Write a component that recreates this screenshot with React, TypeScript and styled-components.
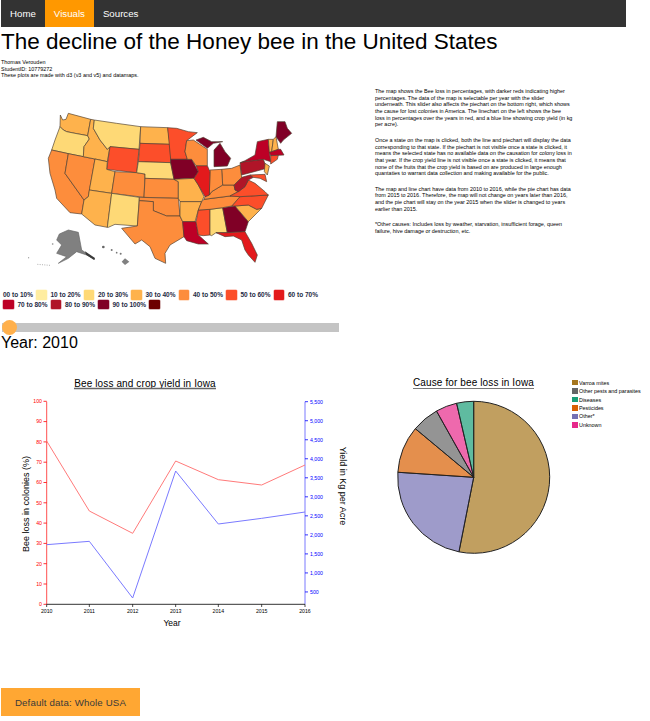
import React from 'react';
import styled, { createGlobalStyle } from 'styled-components';

const GlobalStyle = createGlobalStyle`
  html, body {
    margin: 0;
    padding: 0;
    background: #fff;
    overflow: hidden;
  }
  body {
    font-family: "Liberation Sans", Arial, sans-serif;
    color: #000;
  }
`;

const Page = styled.div`
  width: 650px;
  height: 721px;
  padding-left: 1px;
  box-sizing: border-box;
  overflow: hidden;
`;

const Nav = styled.nav`
  display: flex;
  width: 625px;
  height: 27px;
  background: #333;
`;

const NavLink = styled.a<{ $active?: boolean }>`
  display: flex;
  align-items: center;
  padding: 0 9px;
  font-size: 9.7px;
  color: #fff;
  background: ${p => (p.$active ? '#ff9800' : 'transparent')};
`;

const Title = styled.h1`
  margin: 0;
  height: 31px;
  font-size: 22.5px;
  font-weight: 400;
  line-height: 29px;
  color: #000;
  white-space: nowrap;
`;

const Intro = styled.div`
  height: 30px;
  padding-top: 1px;
  box-sizing: border-box;
  font-size: 5.45px;
  line-height: 6.6px;
`;

const TopRow = styled.div`
  display: flex;
  height: 282px;
`;

const LeftCol = styled.div`
  width: 374px;
  flex-shrink: 0;
`;

const MapSvg = styled.svg`
  display: block;
  width: 320px;
  height: 190px;
  margin: 2px 0 0 -1px;
`;

const Legend = styled.div`
  display: flex;
  flex-wrap: wrap;
  align-items: center;
  width: 332px;
  margin: 10px 0 0 2px;
`;

const LegendLabel = styled.span`
  height: 9.6px;
  margin-right: 3px;
  font-size: 6.5px;
  font-weight: 700;
  line-height: 9.6px;
  color: #1d2a44;
`;

const Swatch = styled.span<{ $color: string }>`
  display: block;
  width: 10.5px;
  height: 9.6px;
  margin-right: 4px;
  border-radius: 1px;
  background: ${p => p.$color};
  box-shadow: 0 0 0 0.5px ${p => p.$color}88;
`;

const Slider = styled.div`
  position: relative;
  width: 337px;
  height: 9px;
  margin: 13.8px 0 0 1px;
  background: #c4c4c4;
`;

const Thumb = styled.span`
  position: absolute;
  left: 0;
  top: -3px;
  width: 15px;
  height: 15px;
  border-radius: 50%;
  background: #ffb04c;
`;

const Year = styled.div`
  margin-top: 2px;
  font-size: 16px;
  line-height: 18px;
`;

const RightCol = styled.div`
  width: 200px;
  font-size: 5.45px;
  line-height: 6.67px;
`;

const Para = styled.p`
  margin: 0 0 8.8px;
`;

const Line = styled.span`
  display: block;
  white-space: nowrap;
`;

const ChartRow = styled.div`
  display: flex;
  height: 270px;
`;

const LineSvg = styled.svg`
  display: block;
  width: 360px;
  height: 270px;
  margin-left: -1px;
  flex-shrink: 0;
  font-family: "Liberation Sans", Arial, sans-serif;
`;

const PieBlock = styled.div`
  display: flex;
  margin-left: 20px;
`;

const PieSvg = styled.svg`
  display: block;
  width: 190px;
  height: 190px;
  flex-shrink: 0;
`;

const PieColumn = styled.div`
  width: 190px;
  flex-shrink: 0;
  font-family: "Liberation Sans", Arial, sans-serif;
`;

const PieTitle = styled.div`
  height: 21px;
  box-sizing: border-box;
  padding-top: 7px;
  margin-left: 33px;
  font-size: 10px;
  line-height: 12px;
`;

const Underlined = styled.span`
  border-bottom: 1.5px solid #777;
  letter-spacing: 0.12px;
`;

const PieLegend = styled.ul`
  list-style: none;
  margin: 0 0 0 2px;
  padding: 8.5px 0 0;
`;

const PieLegendRow = styled.li`
  display: flex;
  align-items: center;
  gap: 1.5px;
  height: 8.45px;
  font-size: 5.4px;
  white-space: nowrap;
`;

const PieSwatch = styled.span<{ $color: string }>`
  display: block;
  width: 5.5px;
  height: 5.5px;
  background: ${p => p.$color};
`;

const ResetButton = styled.button`
  display: block;
  width: 139px;
  height: 28px;
  margin-top: 48px;
  padding: 0;
  border: 0;
  background: #ffa733;
  font-family: "Liberation Sans", Arial, sans-serif;
  font-size: 9.7px;
  letter-spacing: 0.15px;
  color: #3a3a3a;
`;

const c = {
  a: '#ffeda0',
  b: '#fed976',
  c: '#feb24c',
  d: '#fd8d3c',
  e: '#fc4e2a',
  f: '#e31a1c',
  g: '#bd0026',
  h: '#b01528',
  i: '#800026',
  j: '#6d0000',
};

// coordinates are read off a 3x crop of the map, viewBox below is 960x570
const states: [string, string][] = [
  [c.c, '181,75 188,90 198,88 205,70 272,88 263,137 225,130 200,125 190,120 180,110'],
  [c.b, '180,110 190,120 200,125 225,130 263,137 268,147 252,170 250,200 205,191 155,180 165,150'],
  [c.d, '155,180 205,191 195,250 252,330 245,372 210,368 170,325 165,300 150,250 145,205'],
  [c.d, '205,191 250,200 285,207 265,320 252,330 195,250'],
  [c.c, '272,88 283,90 280,115 300,150 322,178 330,170 322,215 285,207 250,200 252,170 268,147 263,137'],
  [c.b, '283,90 350,100 422,110 417,178 330,170 322,178 300,150 280,115'],
  [c.e, '330,170 417,178 410,248 320,238'],
  [c.c, '285,207 322,215 320,238 345,245 335,310 268,300'],
  [c.d, '345,245 410,248 435,252 432,322 335,310'],
  [c.c, '268,300 335,310 322,412 285,405 245,372 252,330 265,320'],
  [c.b, '335,310 418,322 412,408 345,403 325,412 322,412'],
  [c.c, '422,110 503,113 510,163 420,160'],
  [c.e, '420,160 510,163 512,208 512,218 415,215'],
  [c.b, '415,215 512,218 522,268 435,265 435,252 410,248'],
  [c.d, '435,265 522,268 535,275 535,325 432,322'],
  [c.d, '418,322 535,325 540,378 500,378 460,362 460,335 418,332'],
  [c.d, '418,332 460,335 460,362 500,378 540,378 548,395 552,440 510,465 495,490 497,520 465,505 450,470 425,450 405,462 365,415 412,408'],
  [c.e, '503,113 530,115 565,125 592,128 560,152 555,185 562,208 512,208'],
  [c.i, '512,208 562,208 575,208 595,245 582,265 522,268 512,218'],
  [c.c, '522,268 582,265 595,285 612,320 605,335 540,335 535,325 535,275'],
  [c.c, '540,335 605,335 595,360 585,395 548,395 540,378'],
  [c.g, '548,395 588,395 595,435 625,462 595,462 560,452 552,440'],
  [c.e, '595,360 630,358 630,435 610,437 595,435 588,395'],
  [c.b, '630,358 668,353 682,428 648,428 635,437 630,435'],
  [c.i, '668,353 705,348 745,395 735,425 682,428'],
  [c.f, '648,428 682,428 735,425 755,460 772,495 765,517 745,495 735,480 725,450 700,438 675,440'],
  [c.c, '705,348 745,345 770,358 785,355 745,395'],
  [c.e, '695,348 720,320 805,315 785,355 770,358 745,345 705,348'],
  [c.d, '605,335 612,328 690,318 720,320 695,348 668,353 630,358 595,360'],
  [c.d, '612,328 615,320 628,315 635,305 668,285 702,285 705,300 715,305 690,318'],
  [c.e, '690,318 715,305 735,290 745,270 765,280 795,305 805,315 720,320'],
  [c.h, '702,285 722,265 725,262 750,255 760,262 745,270 735,290 715,305 705,300'],
  [c.d, '665,238 695,235 720,225 725,262 722,265 702,285 668,285'],
  [c.d, '630,240 665,238 668,285 635,305 628,315'],
  [c.f, '588,227 622,227 630,245 628,315 615,320 595,285 582,265 595,245'],
  [c.d, '560,152 580,150 622,178 622,227 588,227 575,208 562,208 555,185'],
  [c.i, '588,150 610,142 635,155 668,155 640,160 622,175'],
  [c.i, '642,230 642,180 660,160 675,185 692,205 682,228'],
  [c.h, '720,218 733,215 790,208 800,235 725,255'],
  [c.g, '722,218 735,212 765,195 772,155 805,148 810,200 812,215 790,208 733,215'],
  [c.i, '832,95 855,95 862,115 875,130 850,150 842,160 828,140'],
  [c.c, '805,148 820,148 815,185 808,187'],
  [c.c, '820,148 828,140 835,178 815,185'],
  [c.g, '808,187 815,185 835,178 842,178 852,195 812,197'],
  [c.e, '812,197 835,196 832,208 812,222'],
  [c.c, '795,220 808,228 802,255 793,245'],
  [c.e, '750,255 795,253 800,275 780,265 760,262'],
];

const alaska = '178,432 205,420 235,427 245,480 285,508 260,495 230,485 205,505 175,520 200,500 170,490 185,465 170,450';
const hawaii = '375,505 388,515 375,525 365,515';

const legend: [string, string][] = [
  ['00 to 10%', c.a],
  ['10 to 20%', c.b],
  ['20 to 30%', c.c],
  ['30 to 40%', c.d],
  ['40 to 50%', c.e],
  ['50 to 60%', c.f],
  ['60 to 70%', c.g],
  ['70 to 80%', c.h],
  ['80 to 90%', c.i],
  ['90 to 100%', c.j],
];

const notes: string[][] = [
  [
    'The map shows the Bee loss in percentages, with darker reds indicating higher',
    'percentages. The data of the map is selectable per year with the slider',
    'underneath. This slider also affects the piechart on the bottom right, which shows',
    'the cause for lost colonies in America. The linechart on the left shows the bee',
    'loss in percentages over the years in red, and a blue line showing crop yield (in kg',
    'per acre).',
  ],
  [
    'Once a state on the map is clicked, both the line and piechart will display the data',
    'corresponding to that state. If the piechart is not visible once a state is clicked, it',
    'means the selected state has no available data on the causation for colony loss in',
    'that year. If the crop yield line is not visible once a state is clicked, it means that',
    'none of the fruits that the crop yield is based on are produced in large enough',
    'quantaties to warrant data collection and making available for the public.',
  ],
  [
    'The map and line chart have data from 2010 to 2016, while the pie chart has data',
    'from 2015 to 2016. Therefore, the map will not change on years later than 2016,',
    'and the pie chart will stay on the year 2015 when the slider is changed to years',
    'earlier than 2015.',
  ],
  [
    '*Other causes: Includes loss by weather, starvation, insufficient forage, queen',
    'failure, hive damage or destruction, etc.',
  ],
];

const xTicks = [140, 268, 398, 527, 655, 785, 915].map(v => v / 3);
const years = [2010, 2011, 2012, 2013, 2014, 2015, 2016];
const redLine = [213, 423, 490, 273, 329, 345, 285].map(v => v / 3);
const blueLine = [524, 514, 684, 303, 462, 445, 426].map(v => v / 3);
const points = (ys: number[]) => ys.map((y, i) => `${xTicks[i]},${y}`).join(' ');

const leftTicks = Array.from({ length: 11 }, (_, i) => i * 10);
const rightTicks = Array.from({ length: 11 }, (_, i) => 500 + i * 500);
const leftY = (v: number) => 234.3 - v * 2.03;
const rightY = (v: number) => 31.7 + (5500 - v) * 0.03805;

const slices: { label: string; color: string; end: number }[] = [
  { label: 'Varroa mites', color: '#a6761d', end: 191.2 },
  { label: 'Other pests and parasites', color: '#666666', end: 330.7 },
  { label: 'Diseases', color: '#1b9e77', end: 360 },
  { label: 'Pesticides', color: '#d95f02', end: 309.8 },
  { label: 'Other*', color: '#7570b3', end: 273.8 },
  { label: 'Unknown', color: '#e7298a', end: 347 },
];

const sorted = [...slices].sort((a, b) => a.end - b.end);

function arcPath (start: number, end: number) {
  const cx = 93.7;
  const cy = 86.3;
  const r = 76;
  const at = (deg: number) => {
    const rad = (deg * Math.PI) / 180;
    return `${cx + r * Math.sin(rad)},${cy - r * Math.cos(rad)}`;
  };
  const large = end - start > 180 ? 1 : 0;
  return `M${cx},${cy}L${at(start)}A${r},${r} 0 ${large} 1 ${at(end)}Z`;
}

const UsMap = () => (
  <MapSvg viewBox="0 0 960 570">
    {states.map(([fill, pts]) => (
      <polygon key={pts} points={pts} fill={fill} stroke="#4f4030" strokeWidth={2} strokeLinejoin="round" />
    ))}
    <polygon points={alaska} fill="#808080" stroke="#666" strokeWidth={2} />
    <polygon points="255,484 285,504 282,510 258,494" fill="#3a3a3a" />
    <polygon points={hawaii} fill="#808080" />
    <circle cx={310} cy={471} r={4} fill="#666" />
    <circle cx={335} cy={480} r={3} fill="#777" />
    <circle cx={350} cy={488} r={2.5} fill="#777" />
    <circle cx={362} cy={491} r={3} fill="#777" />
    <circle cx={158} cy={462} r={2.5} fill="#888" />
    <circle cx={86} cy={503} r={1.5} fill="#555" />
    <path d="M112 523 L150 526" stroke="#888" strokeWidth={2} strokeDasharray="3 4" />
  </MapSvg>
);

const LineChart = () => (
  <LineSvg viewBox="0 0 360 270">
    <text x={145} y={17} textAnchor="middle" fontSize={10} letterSpacing={0.12}>Bee loss and crop yield in Iowa</text>
    <line x1={74} x2={216} y1={18.5} y2={18.5} stroke="#666" strokeWidth={1.5} />

    <line x1={46.7} x2={46.7} y1={31.7} y2={234.3} stroke="#ff5050" strokeWidth={1} />
    {leftTicks.map(v => (
      <g key={v}>
        <line x1={43.5} x2={46.7} y1={leftY(v)} y2={leftY(v)} stroke="#f00" strokeWidth={0.8} />
        <text x={42} y={leftY(v) + 1.8} textAnchor="end" fontSize={5.2} fill="#f00">{v}</text>
      </g>
    ))}

    <line x1={305} x2={305} y1={31.7} y2={234.3} stroke="#7a7aff" strokeWidth={1} />
    {rightTicks.map(v => (
      <g key={v}>
        <line x1={305} x2={308} y1={rightY(v)} y2={rightY(v)} stroke="#00f" strokeWidth={0.8} />
        <text x={310} y={rightY(v) + 1.8} fontSize={5.2} fill="#00f">{v.toLocaleString('en-US')}</text>
      </g>
    ))}

    <line x1={46.7} x2={305} y1={234.3} y2={234.3} stroke="#333" strokeWidth={1} />
    {years.map((y, i) => (
      <g key={y}>
        <line x1={xTicks[i]} x2={xTicks[i]} y1={234.3} y2={237} stroke="#000" strokeWidth={0.7} />
        <text x={xTicks[i]} y={242.5} textAnchor="middle" fontSize={5.2}>{y}</text>
      </g>
    ))}

    <polyline points={points(redLine)} fill="none" stroke="#ff7a7a" strokeWidth={1} />
    <polyline points={points(blueLine)} fill="none" stroke="#7a7aff" strokeWidth={1} />

    <text x={172} y={256} textAnchor="middle" fontSize={8.5}>Year</text>
    <text transform="translate(29,134) rotate(-90)" textAnchor="middle" fontSize={9}>Bee loss in colonies (%)</text>
    <text transform="translate(340,116) rotate(90)" textAnchor="middle" fontSize={9}>Yield in Kg per Acre</text>
  </LineSvg>
);

const PieChart = () => {
  let start = 0;
  return (
    <PieSvg viewBox="0 0 190 190">
      {sorted.map(s => {
        const d = arcPath(start, s.end);
        start = s.end;
        return (
          <path key={s.label} d={d} fill={s.color} fillOpacity={0.7} stroke="#222" strokeWidth={1} />
        );
      })}
    </PieSvg>
  );
};

export default function App () {
  return (
    <Page>
      <GlobalStyle />
      <Nav>
        <NavLink>Home</NavLink>
        <NavLink $active>Visuals</NavLink>
        <NavLink>Sources</NavLink>
      </Nav>
      <Title>The decline of the Honey bee in the United States</Title>
      <Intro>
        Thomas Verouden<br />
        StudentID: 10779272<br />
        These plots are made with d3 (v3 and v5) and datamaps.
      </Intro>
      <TopRow>
        <LeftCol>
          <UsMap />
          <Legend>
            {legend.map(([label, color]) => (
              <React.Fragment key={label}>
                <LegendLabel>{label}</LegendLabel>
                <Swatch $color={color} />
              </React.Fragment>
            ))}
          </Legend>
          <Slider><Thumb /></Slider>
          <Year>Year: 2010</Year>
        </LeftCol>
        <RightCol>
          {notes.map(lines => (
            <Para key={lines[0]}>
              {lines.map(line => <Line key={line}>{line}</Line>)}
            </Para>
          ))}
        </RightCol>
      </TopRow>
      <ChartRow>
        <LineChart />
        <PieBlock>
          <PieColumn>
            <PieTitle><Underlined>Cause for bee loss in Iowa</Underlined></PieTitle>
            <PieChart />
          </PieColumn>
          <PieLegend>
            {slices.map(s => (
              <PieLegendRow key={s.label}>
                <PieSwatch $color={s.color} />
                {s.label}
              </PieLegendRow>
            ))}
          </PieLegend>
        </PieBlock>
      </ChartRow>
      <ResetButton>Default data: Whole USA</ResetButton>
    </Page>
  );
}
